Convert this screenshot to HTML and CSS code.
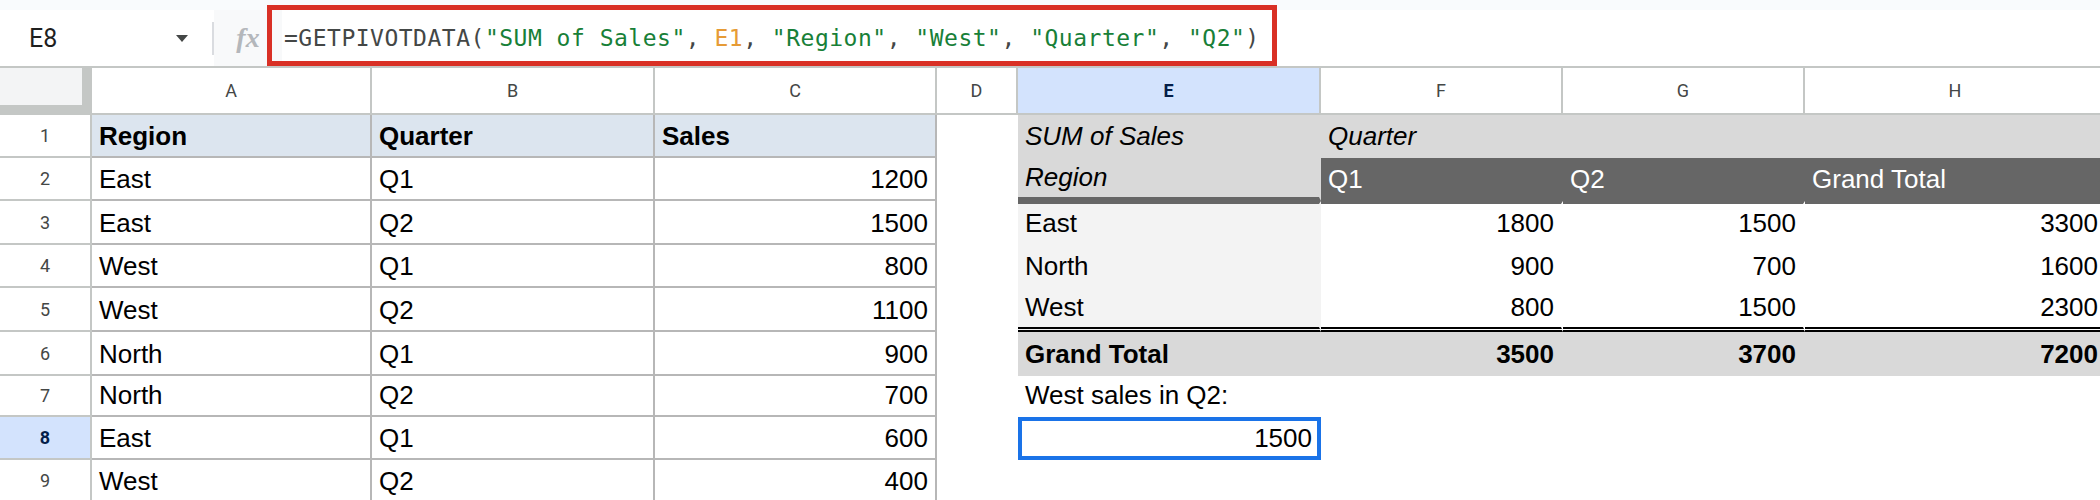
FILE: index.html
```html
<!DOCTYPE html>
<html lang="en">
<head>
    <meta charset="UTF-8">
    <meta name="viewport" content="width=device-width, initial-scale=1.0">
    <title>GETPIVOTDATA example</title>
    <link rel="stylesheet" href="styles.css">
</head>
<body>
    <div class="top-strip"></div>

    <div class="formula-bar">
        <div class="name-box">
            <span>E8</span>
            <span class="caret"></span>
        </div>
        <div class="divider"></div>
        <div class="fx">fx</div>
        <div class="formula">=GETPIVOTDATA(<span class="str">"SUM of Sales"</span>, <span class="ref">E1</span>, <span class="str">"Region"</span>, <span class="str">"West"</span>, <span class="str">"Quarter"</span>, <span class="str">"Q2"</span>)</div>
        <div class="callout"></div>
    </div>

    <div class="sheet">
        <!-- column headers -->
        <div class="corner"></div>
        <div class="col-head">A</div>
        <div class="col-head">B</div>
        <div class="col-head">C</div>
        <div class="col-head">D</div>
        <div class="col-head selected">E</div>
        <div class="col-head">F</div>
        <div class="col-head">G</div>
        <div class="col-head">H</div>

        <!-- row 1 -->
        <div class="row-head">1</div>
        <div class="cell table head">Region</div>
        <div class="cell table head">Quarter</div>
        <div class="cell table head">Sales</div>
        <div class="cell"></div>
        <div class="cell pv-head italic">SUM of Sales</div>
        <div class="cell pv-head italic">Quarter</div>
        <div class="cell pv-head"></div>
        <div class="cell pv-head"></div>

        <!-- row 2 -->
        <div class="row-head">2</div>
        <div class="cell table">East</div>
        <div class="cell table">Q1</div>
        <div class="cell table num">1200</div>
        <div class="cell"></div>
        <div class="cell pv-head pv-split italic">Region</div>
        <div class="cell pv-dark">Q1</div>
        <div class="cell pv-dark">Q2</div>
        <div class="cell pv-dark">Grand Total</div>

        <!-- row 3 -->
        <div class="row-head">3</div>
        <div class="cell table">East</div>
        <div class="cell table">Q2</div>
        <div class="cell table num">1500</div>
        <div class="cell"></div>
        <div class="cell pv-label pv-top">East</div>
        <div class="cell pv-top num">1800</div>
        <div class="cell pv-top num">1500</div>
        <div class="cell pv-top num">3300</div>

        <!-- row 4 -->
        <div class="row-head">4</div>
        <div class="cell table">West</div>
        <div class="cell table">Q1</div>
        <div class="cell table num">800</div>
        <div class="cell"></div>
        <div class="cell pv-label">North</div>
        <div class="cell num">900</div>
        <div class="cell num">700</div>
        <div class="cell num">1600</div>

        <!-- row 5 -->
        <div class="row-head">5</div>
        <div class="cell table">West</div>
        <div class="cell table">Q2</div>
        <div class="cell table num">1100</div>
        <div class="cell"></div>
        <div class="cell pv-label pv-end">West</div>
        <div class="cell pv-end num">800</div>
        <div class="cell pv-end num">1500</div>
        <div class="cell pv-end num">2300</div>

        <!-- row 6 -->
        <div class="row-head">6</div>
        <div class="cell table">North</div>
        <div class="cell table">Q1</div>
        <div class="cell table num">900</div>
        <div class="cell"></div>
        <div class="cell pv-total">Grand Total</div>
        <div class="cell pv-total num">3500</div>
        <div class="cell pv-total num">3700</div>
        <div class="cell pv-total num">7200</div>

        <!-- row 7 -->
        <div class="row-head">7</div>
        <div class="cell table">North</div>
        <div class="cell table">Q2</div>
        <div class="cell table num">700</div>
        <div class="cell"></div>
        <div class="cell">West sales in Q2:</div>
        <div class="cell"></div>
        <div class="cell"></div>
        <div class="cell"></div>

        <!-- row 8 -->
        <div class="row-head selected">8</div>
        <div class="cell table">East</div>
        <div class="cell table">Q1</div>
        <div class="cell table num">600</div>
        <div class="cell"></div>
        <div class="cell active num">1500</div>
        <div class="cell"></div>
        <div class="cell"></div>
        <div class="cell"></div>

        <!-- row 9 -->
        <div class="row-head">9</div>
        <div class="cell table">West</div>
        <div class="cell table">Q2</div>
        <div class="cell table num">400</div>
        <div class="cell"></div>
        <div class="cell"></div>
        <div class="cell"></div>
        <div class="cell"></div>
        <div class="cell"></div>
    </div>
</body>
</html>
```

FILE: styles.css
```css
html, body {
    margin: 0;
    overflow: hidden;
}
body {
    width: 2100px;
    height: 500px;
    background-color: #fff;
    font-family: "Liberation Sans", Arial, sans-serif;
}
.top-strip {
    height: 10px;
    background-color: #f9fbfd;
}

/* formula bar */
.formula-bar {
    position: relative;
    display: flex;
    height: 58px;
    box-sizing: border-box;
    border-bottom: 2px solid #c4c7c5;
    background-color: #fff;
}
.name-box {
    width: 212px;
    box-sizing: border-box;
    display: flex;
    align-items: center;
    padding: 0 24px 0 29px;
    font-family: Roboto, sans-serif;
    font-size: 25px;
    color: #1f1f1f;
}
.caret {
    margin-left: auto;
    width: 0;
    height: 0;
    border-left: 6.5px solid transparent;
    border-right: 6.5px solid transparent;
    border-top: 7px solid #444746;
}
.divider {
    width: 2px;
    height: 33px;
    align-self: center;
    background-color: #dadce0;
}
.fx {
    width: 68px;
    display: flex;
    align-items: center;
    justify-content: center;
    background-color: #f8f9fa;
    font-family: "Liberation Serif", serif;
    font-style: italic;
    font-weight: bold;
    font-size: 28px;
    color: #b4b7bb;
}
.formula {
    flex: 1;
    padding-left: 2px;
    line-height: 56px;
    font-family: "DejaVu Sans Mono", monospace;
    font-size: 23px;
    letter-spacing: 0.5px;
    color: #444746;
    white-space: pre;
}
.formula .str {
    color: #188038;
}
.formula .ref {
    color: #e69b36;
}
.callout {
    position: absolute;
    left: 267px;
    top: -5px;
    width: 1010px;
    height: 61px;
    box-sizing: border-box;
    border: 5px solid #d93025;
    pointer-events: none;
}

/* grid */
.sheet {
    display: grid;
    grid-template-columns: 92px 280px 283px 282px 81px 303px 242px 242px 302px;
    grid-template-rows: 47px 43px 43px 44px 43px 44px 44px 41px 43px 43px;
}
.corner {
    background-color: #f3f4f5;
    border-right: 10px solid #c4c7c5;
    border-bottom: 10px solid #c4c7c5;
}
.col-head,
.row-head {
    display: flex;
    align-items: center;
    justify-content: center;
    box-sizing: border-box;
    border-right: 2px solid #c4c7c5;
    border-bottom: 2px solid #c4c7c5;
    font-family: Roboto, sans-serif;
    font-size: 18px;
    color: #444746;
}
.col-head.selected,
.row-head.selected {
    background-color: #d3e3fd;
    color: #041e49;
    font-weight: bold;
}
.cell {
    display: flex;
    align-items: flex-end;
    box-sizing: border-box;
    padding: 0 7px 4px;
    border-right: 2px solid transparent;
    border-bottom: 2px solid transparent;
    font-size: 26px;
    color: #000;
    white-space: nowrap;
}
.num {
    justify-content: flex-end;
}
.italic {
    font-style: italic;
}

/* source table */
.table {
    border-right-color: #b7b7b7;
    border-bottom-color: #b7b7b7;
}
.table.head {
    background-color: #dce5ef;
    font-weight: bold;
}

/* pivot table */
.pv-head {
    background-color: #d9d9d9;
}
.pv-split {
    border-bottom: 4px solid #666;
}
.pv-dark {
    background-color: #666;
    color: #fff;
}
.pv-top {
    border-top: 3px solid #666;
}
.pv-label {
    background-color: #f3f3f3;
}
.pv-end {
    border-bottom: 5px double #000;
}
.pv-total {
    background-color: #d9d9d9;
    font-weight: bold;
}

.active {
    border: 4px solid #1a73e8;
    padding: 0 5px 2px;
}
```
